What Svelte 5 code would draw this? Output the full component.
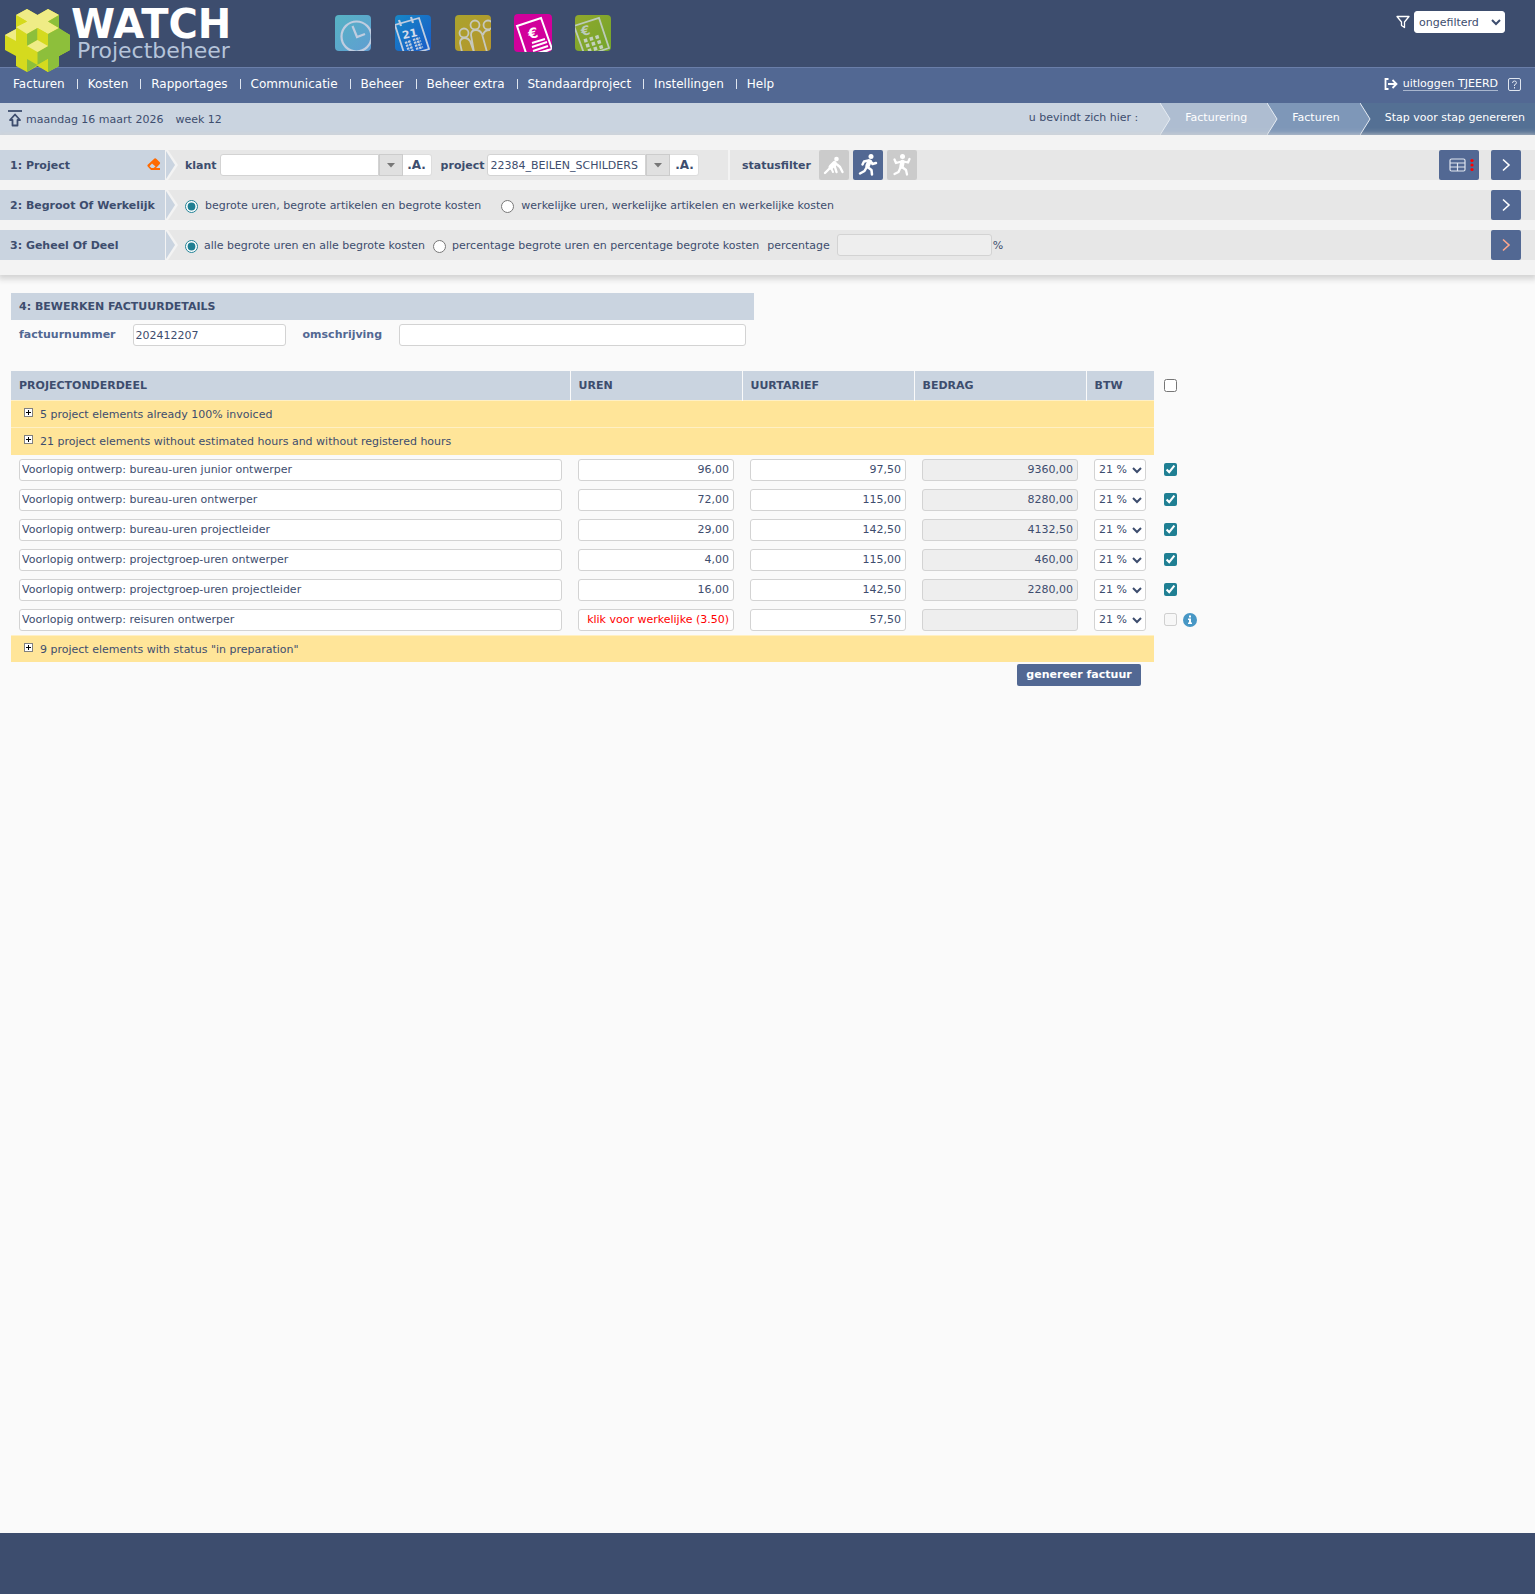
<script>
  const menu = [
    'Facturen',
    'Kosten',
    'Rapportages',
    'Communicatie',
    'Beheer',
    'Beheer extra',
    'Standaardproject',
    'Instellingen',
    'Help'
  ];

  let basis = $state('begroot');
  let deel = $state('alles');
  let status = $state('actief');

  let rows = $state([
    { naam: 'Voorlopig ontwerp: bureau-uren junior ontwerper', uren: '96,00', tarief: '97,50', bedrag: '9360,00', aan: true },
    { naam: 'Voorlopig ontwerp: bureau-uren ontwerper', uren: '72,00', tarief: '115,00', bedrag: '8280,00', aan: true },
    { naam: 'Voorlopig ontwerp: bureau-uren projectleider', uren: '29,00', tarief: '142,50', bedrag: '4132,50', aan: true },
    { naam: 'Voorlopig ontwerp: projectgroep-uren ontwerper', uren: '4,00', tarief: '115,00', bedrag: '460,00', aan: true },
    { naam: 'Voorlopig ontwerp: projectgroep-uren projectleider', uren: '16,00', tarief: '142,50', bedrag: '2280,00', aan: true },
    { naam: 'Voorlopig ontwerp: reisuren ontwerper', uren: 'klik voor werkelijke (3.50)', tarief: '57,50', bedrag: '', aan: false, werkelijk: true }
  ]);
</script>

{#snippet stepArrow()}
  <svg class="step-arrow" width="13" height="30" viewBox="0 0 13 30" aria-hidden="true">
    <path d="M0 0H3L13 15L3 30H0Z" fill="#f3f3f3" />
    <path d="M1 1L10 15L1 29Z" fill="#cad4e0" />
  </svg>
{/snippet}

{#snippet crumbArrow(color)}
  <svg width="11" height="32" viewBox="0 0 11 32" aria-hidden="true">
    <path d="M0 0L10 16L0 32Z" fill={color} />
    <path d="M0 0L10 16L0 32" fill="none" stroke="#e6ecf3" />
  </svg>
{/snippet}

{#snippet nextButton(color)}
  <button class="next" aria-label="volgende stap">
    <svg width="30" height="30" viewBox="0 0 30 30" fill="none" stroke={color} stroke-width="1.6">
      <path d="M12 9.500L18 15L12 20.500" />
    </svg>
  </button>
{/snippet}

{#snippet groupRow(text)}
  <tr class="group">
    <td colspan="5">
      <button class="expand">
        <svg width="9" height="9" viewBox="0 0 9 9" shape-rendering="crispEdges" aria-hidden="true">
          <rect x="0.500" y="0.500" width="8" height="8" fill="#fff" stroke="#808080" />
          <path d="M2 4.500H7M4.500 2V7" stroke="#000" />
        </svg>
        <span>{text}</span>
      </button>
    </td>
  </tr>
{/snippet}

<div class="page">
  <header>
    <a class="logo" href="/" aria-label="WATCH Projectbeheer">
      <svg width="65" height="63" viewBox="0 0 65 63" aria-hidden="true">
        <path d="M11 6L22 0L32.500 6L43 0L54 6V20L65 26V41L54 47V57L43 63L32.500 57L22 63L11 57V47L0 41V26L11 20Z" fill="#d5da1e" />
        <path d="M11 6L22 0L32.500 6L43 0L54 6L43 12.500L54 19L43 25L32.500 19L22 25L11 18L22 12.500Z" fill="#efec86" />
        <path d="M11 20L0 26L11 32Z" fill="#efec86" />
        <path d="M43 25L54 19L65 26V41L54 47V57L43 63V50L32.500 56V43L43 37Z" fill="#8dbf3b" />
        <path d="M22 25L32.500 19V31L22 37Z" fill="#8dbf3b" />
        <path d="M32.500 19L43 25V37L32.500 31Z" fill="#d5da1e" />
        <path d="M22 37L32.500 31L43 37L32.500 43Z" fill="#efec86" />
        <path d="M22 50L32.500 56L22 63Z" fill="#8dbf3b" />
        <path d="M43 50L32.500 56L43 63Z" fill="#d5da1e" />
        <path d="M43 12.500L54 6V19Z" fill="#8dbf3b" />
        <path d="M22 12.500L11 6V18Z" fill="#d5da1e" />
      </svg>
      <span class="brand">
        <span class="brand-name">WATCH</span>
        <span class="brand-sub">Projectbeheer</span>
      </span>
    </a>

    <div class="modules">
      <button aria-label="uren">
        <svg width="38" height="38" viewBox="0 0 38 38">
          <defs>
            <linearGradient id="g1" x1="0" y1="0" x2="1" y2="1"><stop offset="0" stop-color="#57b3c4" /><stop offset="1" stop-color="#5f9dd2" /></linearGradient>
            <clipPath id="c1"><rect x="1" y="1" width="36" height="36" rx="4" /></clipPath>
          </defs>
          <g clip-path="url(#c1)">
            <rect x="1" y="1" width="36" height="36" fill="url(#g1)" />
            <g fill="none" stroke="#c0cde0" stroke-width="2.200">
              <circle cx="22.500" cy="22.500" r="15" />
              <path d="M18.500 12L23 23L31 20" />
            </g>
          </g>
        </svg>
      </button>
      <button aria-label="planning">
        <svg width="38" height="38" viewBox="0 0 38 38">
          <defs>
            <linearGradient id="g2" x1="0" y1="0" x2="1" y2="1"><stop offset="0" stop-color="#1787c6" /><stop offset="1" stop-color="#185ac8" /></linearGradient>
            <clipPath id="c2"><rect x="1" y="1" width="36" height="36" rx="4" /></clipPath>
          </defs>
          <g clip-path="url(#c2)">
            <rect x="1" y="1" width="36" height="36" fill="url(#g2)" />
            <g fill="none" stroke="#c0cde0" stroke-width="1.800">
              <path d="M1 11L25 4L35 35L11 42Z" />
              <path d="M5 6L7 12M17 3L19 9" stroke-width="2.200" />
              <path d="M11 29L17 27M19 26L26 24M12 32L18 30M20 29L27 27M13 35L19 33M21 32L28 30M14 38L20 36M22 35L29 33" stroke-width="2.200" stroke-dasharray="2.500 0.800" />
            </g>
            <text x="8" y="24" transform="rotate(-12 14 20)" font-family="DejaVu Sans" font-size="11" font-weight="bold" fill="#d4dcea">21</text>
          </g>
        </svg>
      </button>
      <button aria-label="relaties">
        <svg width="38" height="38" viewBox="0 0 38 38">
          <defs>
            <linearGradient id="g3" x1="0" y1="0" x2="1" y2="1"><stop offset="0" stop-color="#aaa32d" /><stop offset="1" stop-color="#b5952d" /></linearGradient>
            <clipPath id="c3"><rect x="1" y="1" width="36" height="36" rx="4" /></clipPath>
          </defs>
          <g clip-path="url(#c3)">
            <rect x="1" y="1" width="36" height="36" fill="url(#g3)" />
            <g fill="none" stroke="#c6c8bd" stroke-width="1.800">
              <circle cx="10" cy="19" r="4.500" />
              <circle cx="21" cy="11" r="4.500" />
              <circle cx="34" cy="11" r="4.500" />
              <path d="M8 38L6 29Q6 24 11 24Q14 24 16 27L20 38M20 38L17 21Q17 16 22 16Q26 16 28 20L33 38M29 21Q30 16 36 16" />
            </g>
          </g>
        </svg>
      </button>
      <button class="current" aria-label="facturering">
        <svg width="38" height="38" viewBox="0 0 38 38">
          <defs><clipPath id="c4"><rect width="38" height="38" rx="4" /></clipPath></defs>
          <g clip-path="url(#c4)">
            <rect width="38" height="38" fill="#d1009b" />
            <g fill="none" stroke="#fff" stroke-width="2">
              <path d="M3 12L27 4L38 35L13 42Z" />
              <path d="M18 29L31 25M18 33L33 28M19 37L34 32M20 41L35 36" />
            </g>
            <text x="14" y="24" transform="rotate(-12 19 19)" font-family="DejaVu Sans" font-size="14" font-weight="bold" fill="#fff">€</text>
          </g>
        </svg>
      </button>
      <button aria-label="budget">
        <svg width="38" height="38" viewBox="0 0 38 38">
          <defs>
            <linearGradient id="g5" x1="0" y1="0" x2="1" y2="1"><stop offset="0" stop-color="#90a82c" /><stop offset="1" stop-color="#74a52c" /></linearGradient>
            <clipPath id="c5"><rect x="1" y="1" width="36" height="36" rx="4" /></clipPath>
          </defs>
          <g clip-path="url(#c5)">
            <rect x="1" y="1" width="36" height="36" fill="url(#g5)" />
            <path d="M0 12L25 4L35 34L11 42Z" fill="none" stroke="#bccbb9" stroke-width="1.800" />
            <g stroke="#c4d1bd" stroke-width="3.500" stroke-dasharray="3.500 2.500">
              <path d="M10 27L25 22.500M12 32L27 27.500M14 37L29 32.500" />
            </g>
            <text x="7" y="21" transform="rotate(-12 12 17)" font-family="DejaVu Sans" font-size="13" font-weight="bold" fill="#bccbb9">€</text>
          </g>
        </svg>
      </button>
    </div>

    <div class="filter">
      <svg width="14" height="14" viewBox="0 0 14 14" fill="none" stroke="#fff" stroke-width="1.300" stroke-linejoin="round" aria-hidden="true">
        <path d="M1 1.500H13L8.500 7V12.500L5.500 10.500V7Z" />
      </svg>
      <select aria-label="filter"><option>ongefilterd</option></select>
    </div>
  </header>

  <nav>
    <ul>
      {#each menu as item}
        <li><a href="#{item}">{item}</a></li>
      {/each}
    </ul>
    <div class="session">
      <a class="logout" href="#uitloggen">
        <svg width="14" height="12" viewBox="0 0 14 12" fill="none" stroke="#fff" stroke-width="1.800" aria-hidden="true">
          <path d="M4.500 1H1.500V11H4.500M4 6H12.500M8.500 2L12.500 6L8.500 10" />
        </svg>
        <span>uitloggen TJEERD</span>
      </a>
      <a class="help" href="#help" aria-label="help">
        <svg width="13" height="13" viewBox="0 0 13 13" fill="none" stroke="#dfe5ef" aria-hidden="true">
          <rect x="0.500" y="0.500" width="12" height="12" rx="1.500" />
          <path d="M4.500 5Q4.500 3 6.500 3Q8.500 3 8.500 4.800Q8.500 6 6.500 6.800V8M6.500 9V10.500" />
        </svg>
      </a>
    </div>
  </nav>

  <div class="bar">
    <div class="date">
      <svg width="14" height="18" viewBox="0 0 14 18" fill="none" stroke="#3d4d6e" stroke-width="1.800" aria-hidden="true">
        <path d="M0 1H14" />
        <path d="M7 4.500L12 10H9.500V15.500H4.500V10H2Z" stroke-linejoin="round" />
      </svg>
      <span>maandag 16 maart 2026</span>
      <span class="week">week 12</span>
    </div>
    <div class="crumbs">
      <span class="here">u bevindt zich hier :</span>
      <a class="crumb c1" href="#facturering">{@render crumbArrow('#cad4e0')}<span>Facturering</span></a>
      <a class="crumb c2" href="#facturen">{@render crumbArrow('#aebdd1')}<span>Facturen</span></a>
      <a class="crumb c3" href="#genereren">{@render crumbArrow('#7e97b8')}<span>Stap voor stap genereren</span></a>
    </div>
  </div>

  <section class="steps">
    <div class="step">
      <div class="step-name">
        <span>1: Project</span>
        <button class="erase" aria-label="wissen">
          <svg width="14" height="13" viewBox="0 0 14 13" fill="#ff6a00">
            <path fill-rule="evenodd" d="M7.500 0.500Q8.500 0 9.500 1L12.800 4.300Q13.500 5 12.800 6L9 10H13V12H4L0.700 8.500Q0 7.500 0.700 6.700ZM5 5.500L2.500 8.300L4.500 10H6.500L8.500 8.500Z" />
          </svg>
        </button>
      </div>
      {@render stepArrow()}
      <div class="pickers">
        <label for="klant">klant</label>
        <div class="combo">
          <input id="klant" class="klant" type="text" value="" />
          <button class="drop" aria-label="klanten tonen"><svg width="8" height="5" viewBox="0 0 8 5"><path d="M0 0H8L4 4.500Z" fill="#777" /></svg></button>
          <button class="all">.A.</button>
        </div>
        <label for="project">project</label>
        <div class="combo">
          <input id="project" class="project" type="text" value="22384_BEILEN_SCHILDERS" />
          <button class="drop" aria-label="projecten tonen"><svg width="8" height="5" viewBox="0 0 8 5"><path d="M0 0H8L4 4.500Z" fill="#777" /></svg></button>
          <button class="all">.A.</button>
        </div>
      </div>
      <div class="status">
        <span>statusfilter</span>
        <button class:on={status === 'voorbereiding'} onclick={() => (status = 'voorbereiding')} aria-label="in voorbereiding">
          <svg width="22" height="22" viewBox="0 0 22 22" fill="none" stroke="#fff" stroke-linecap="round" stroke-linejoin="round">
            <circle cx="13.500" cy="5" r="2.300" fill="#fff" stroke="none" />
            <path d="M11.500 9.500L8 13" stroke-width="5" />
            <path d="M11 10L13.500 18M7 14L2 19M14 10.500L17 13L19.500 18" stroke-width="2.400" />
            <path d="M8 14L10 18" stroke-width="2" />
          </svg>
        </button>
        <button class:on={status === 'actief'} onclick={() => (status = 'actief')} aria-label="actief">
          <svg width="22" height="22" viewBox="0 0 22 22" fill="none" stroke="#fff" stroke-linecap="round" stroke-linejoin="round">
            <circle cx="14" cy="2.500" r="2.500" fill="#fff" stroke="none" />
            <path d="M12.500 7.500L10.500 12" stroke-width="4.500" />
            <path d="M11.500 6.500L7 7.500L5.500 10.500M13.500 7L15.500 10L19 9M10.500 13L14.500 16L15 20.500M9.500 13.500L7.500 17L3 19.500" stroke-width="2.500" />
          </svg>
        </button>
        <button class:on={status === 'afgerond'} onclick={() => (status = 'afgerond')} aria-label="afgerond">
          <svg width="22" height="22" viewBox="0 0 22 22" fill="none" stroke="#fff" stroke-linecap="round" stroke-linejoin="round">
            <circle cx="11.500" cy="2.500" r="2.500" fill="#fff" stroke="none" />
            <path d="M11.500 8L10.500 12.500" stroke-width="4.500" />
            <path d="M10.500 7.500L5 9L3.500 5.500M12.500 7.500L17 8.500L18.500 5M11 13L15 16L16 20.500M9.500 13.500L7.500 18L3.500 20" stroke-width="2.300" />
          </svg>
        </button>
      </div>
      <div class="actions">
        <button class="layout" aria-label="kolommen">
          <svg width="26" height="14" viewBox="0 0 26 14" fill="none" stroke="#dfe5ef" stroke-width="1.200">
            <rect x="1" y="1" width="15" height="12" rx="1.500" />
            <path d="M1 5H16M1 9H16M8.500 5V13" />
            <g fill="#f00" stroke="none"><circle cx="23" cy="2.500" r="1.600" /><circle cx="23" cy="7" r="1.600" /><circle cx="23" cy="11.500" r="1.600" /></g>
          </svg>
        </button>
        {@render nextButton('#fff')}
      </div>
    </div>

    <div class="step">
      <div class="step-name">2: Begroot Of Werkelijk</div>
      {@render stepArrow()}
      <div class="choices wide">
        <label><input type="radio" name="basis" value="begroot" bind:group={basis} />begrote uren, begrote artikelen en begrote kosten</label>
        <label><input type="radio" name="basis" value="werkelijk" bind:group={basis} />werkelijke uren, werkelijke artikelen en werkelijke kosten</label>
      </div>
      <div class="actions">{@render nextButton('#fff')}</div>
    </div>

    <div class="step">
      <div class="step-name">3: Geheel Of Deel</div>
      {@render stepArrow()}
      <div class="choices">
        <label><input type="radio" name="deel" value="alles" bind:group={deel} />alle begrote uren en alle begrote kosten</label>
        <label><input type="radio" name="deel" value="percentage" bind:group={deel} />percentage begrote uren en percentage begrote kosten</label>
        <span class="percent">
          <label for="percentage">percentage</label>
          <input id="percentage" type="text" disabled={deel === 'alles'} />
          <span>%</span>
        </span>
      </div>
      <div class="actions">{@render nextButton('#ffa78c')}</div>
    </div>
  </section>

  <main>
    <section class="details">
      <h2>4: BEWERKEN FACTUURDETAILS</h2>
      <div class="fields">
        <label for="nummer">factuurnummer</label>
        <input id="nummer" type="text" value="202412207" />
        <label for="omschrijving">omschrijving</label>
        <input id="omschrijving" type="text" />
      </div>
    </section>

    <table>
      <colgroup>
        <col class="col-name" />
        <col class="col-num" />
        <col class="col-num" />
        <col class="col-num" />
        <col class="col-vat" />
        <col class="col-check" />
      </colgroup>
      <thead>
        <tr>
          <th>PROJECTONDERDEEL</th>
          <th>UREN</th>
          <th>UURTARIEF</th>
          <th>BEDRAG</th>
          <th>BTW</th>
          <td class="check"><div><input type="checkbox" aria-label="alles selecteren" /></div></td>
        </tr>
      </thead>
      <tbody>
        {@render groupRow('5 project elements already 100% invoiced')}
        {@render groupRow('21 project elements without estimated hours and without registered hours')}
        {#each rows as row}
          <tr class="line">
            <td><input type="text" aria-label="projectonderdeel" bind:value={row.naam} /></td>
            <td><input class="num" class:actual={row.werkelijk} type="text" aria-label="uren" bind:value={row.uren} /></td>
            <td><input class="num" type="text" aria-label="uurtarief" bind:value={row.tarief} /></td>
            <td><input class="num" type="text" aria-label="bedrag" value={row.bedrag} disabled /></td>
            <td><select aria-label="btw"><option>21 %</option></select></td>
            <td class="check">
              <div>
                <input type="checkbox" aria-label="selecteren" bind:checked={row.aan} disabled={row.werkelijk} />
                {#if row.werkelijk}
                  <svg width="14" height="14" viewBox="0 0 14 14" aria-hidden="true">
                    <circle cx="7" cy="7" r="7" fill="#4797c5" />
                    <path d="M6 2.500H8V4.500H6ZM5 5.500H8V9.500H9V11H5V9.500H6V7H5Z" fill="#fff" />
                  </svg>
                {/if}
              </div>
            </td>
          </tr>
        {/each}
        {@render groupRow('9 project elements with status "in preparation"')}
      </tbody>
    </table>
    <div class="submit"><button>genereer factuur</button></div>
  </main>

  <footer></footer>
</div>

<style>
  :global(body) {
    background: #fafafa;
  }

  .page {
    display: flex;
    flex-direction: column;
    min-height: 100vh;
    font: 11px/16px Verdana, 'DejaVu Sans', sans-serif;
    color: #3d4d6e;
  }

  button,
  input,
  select {
    font: inherit;
    color: inherit;
    margin: 0;
    box-sizing: border-box;
  }

  button {
    border: 0;
    padding: 0;
    background: none;
    cursor: pointer;
  }

  a {
    color: inherit;
    text-decoration: none;
  }

  svg {
    display: block;
    flex: none;
  }

  input[type='text'],
  select {
    height: 22px;
    padding: 0 2px;
    border: 1px solid #d3d3d3;
    border-radius: 3px;
    background: #fff;
  }

  input[type='text']:disabled {
    background: #eee;
  }

  input[type='radio'],
  input[type='checkbox'] {
    width: 13px;
    height: 13px;
    accent-color: #1f7f93;
  }

  /* Header */
  header {
    display: flex;
    align-items: flex-start;
    height: 67px;
    background: #3d4d6e;
  }

  .logo {
    display: flex;
    width: 330px;
    padding: 9px 0 0 5px;
    box-sizing: border-box;
    /* the cube hangs over the menu bar */
    position: relative;
    z-index: 1;
  }

  .brand {
    display: flex;
    flex-direction: column;
    padding-left: 1px;
  }

  .brand-name {
    color: #fff;
    font-size: 40px;
    font-weight: bold;
    line-height: 30px;
  }

  .brand-sub {
    padding-left: 6px;
    color: #b5c4da;
    font-size: 22px;
    line-height: 24px;
  }

  .modules {
    display: flex;
    gap: 22px;
    padding: 14px 0 0 4px;
  }

  .filter {
    display: flex;
    align-items: center;
    gap: 4px;
    margin-left: auto;
    padding: 11px 30px 0 0;
  }

  .filter select {
    width: 91px;
    padding: 0;
    border-color: #fff;
  }

  /* Menu */
  nav {
    display: flex;
    justify-content: space-between;
    align-items: center;
    height: 36px;
    padding: 0 14px 3px 13px;
    border-top: 1px solid #6a7ea9;
    background: #526893;
    color: #fff;
    font-size: 12px;
    box-sizing: border-box;
  }

  nav ul {
    display: flex;
    margin: 0;
    padding: 0;
    list-style: none;
  }

  nav li {
    display: flex;
    align-items: center;
  }

  nav li + li::before {
    content: '';
    width: 1px;
    height: 10px;
    margin: 0 10px 0 12px;
    background: #dfe5ef;
  }

  .session {
    display: flex;
    align-items: center;
    gap: 10px;
    font-size: 11px;
  }

  .logout {
    display: flex;
    align-items: center;
    gap: 5px;
  }

  .logout span {
    line-height: 13px;
    border-bottom: 1px solid #a9b6ce;
  }

  /* Date and breadcrumbs */
  .bar {
    display: flex;
    justify-content: space-between;
    height: 32px;
    background: #cad4e0;
  }

  .date {
    display: flex;
    align-items: center;
    gap: 4px;
    padding-left: 8px;
  }

  .date span {
    padding-top: 2px;
  }

  .date .week {
    padding-left: 8px;
  }

  .crumbs {
    display: flex;
    line-height: 30px;
  }

  .here {
    padding-right: 22px;
  }

  .crumb {
    display: flex;
    gap: 14px;
    padding-right: 20px;
    color: #fff;
  }

  .c1 {
    background: #aebdd1;
  }

  .c2 {
    background: #7e97b8;
  }

  .c3 {
    padding-right: 10px;
    background: #547094;
  }

  /* Steps */
  .steps {
    display: flex;
    flex-direction: column;
    gap: 10px;
    padding: 15px 0;
    background: #f3f3f3;
    box-shadow: 0 2px 6px 2px #d2d2d2;
  }

  .step {
    display: flex;
    height: 30px;
    background: #e7e7e7;
  }

  .step-name {
    display: flex;
    justify-content: space-between;
    align-items: center;
    width: 165px;
    padding: 2px 4px 0 10px;
    box-sizing: border-box;
    background: #cad4e0;
    font-weight: bold;
    white-space: nowrap;
  }

  .erase {
    padding-bottom: 3px;
  }

  .pickers,
  .status,
  .choices {
    display: flex;
    align-items: center;
  }

  .pickers {
    gap: 3px;
    width: 552px;
    padding-left: 7px;
    box-sizing: border-box;
    border-right: 2px solid #f3f3f3;
  }

  .pickers label,
  .status span {
    padding-top: 2px;
    font-weight: bold;
  }

  .combo {
    display: flex;
    margin-right: 6px;
  }

  .combo input {
    border-radius: 3px 0 0 3px;
  }

  .klant,
  .project {
    width: 159px;
  }

  .drop {
    display: flex;
    align-items: center;
    justify-content: center;
    width: 24px;
    height: 22px;
    border: 1px solid #ccc;
    background: #e0e0e0;
  }

  .all {
    width: 29px;
    height: 22px;
    border: 1px solid #ddd;
    border-left: 0;
    border-radius: 0 3px 3px 0;
    background: #fff;
    font-size: 12px;
    font-weight: bold;
  }

  .status {
    gap: 4px;
    padding-left: 12px;
  }

  .status span {
    padding-right: 4px;
  }

  .status button {
    display: flex;
    align-items: center;
    justify-content: center;
    width: 30px;
    height: 30px;
    border-radius: 2px;
    background: #cbcbcb;
  }

  .status button.on {
    background: #526893;
  }

  .choices {
    gap: 8px;
    padding: 2px 0 0 7px;
  }

  .choices.wide {
    gap: 20px;
  }

  .choices label {
    display: flex;
    align-items: center;
    gap: 6px;
  }

  .choices.wide label {
    gap: 7px;
  }

  .percent {
    display: flex;
    align-items: center;
  }

  .percent input {
    width: 155px;
    margin: 0 1px 2px 7px;
  }

  .actions {
    display: flex;
    gap: 12px;
    margin-left: auto;
    padding-right: 14px;
  }

  .layout,
  .next {
    display: flex;
    align-items: center;
    justify-content: center;
    width: 30px;
    height: 30px;
    border-radius: 2px;
    background: #526893;
  }

  .layout {
    width: 40px;
    padding-left: 6px;
  }

  /* Invoice */
  main {
    flex: 1;
    padding: 18px 11px;
  }

  .details {
    width: 743px;
  }

  h2 {
    margin: 0;
    padding: 6px 8px 5px;
    background: #cad4e0;
    font-size: 11px;
    line-height: 16px;
  }

  .fields {
    display: flex;
    align-items: center;
    gap: 17px;
    padding: 4px 8px 25px;
  }

  .fields label {
    color: #526893;
    font-weight: bold;
  }

  #nummer {
    width: 153px;
  }

  #omschrijving {
    flex: 1;
  }

  table {
    width: 1190px;
    table-layout: fixed;
    border-collapse: collapse;
  }

  .col-name {
    width: 559px;
  }

  .col-num {
    width: 172px;
  }

  .col-vat {
    width: 68px;
  }

  .col-check {
    width: 47px;
  }

  th {
    height: 28px;
    padding: 1px 8px 0;
    background: #cad4e0;
    text-align: left;
  }

  th + th {
    border-left: 1px solid #fafafa;
  }

  td {
    padding: 0 8px;
  }

  .group td {
    height: 27px;
    padding: 0 13px;
    border-top: 1px solid #fff0c4;
    background: #ffe599;
    box-sizing: border-box;
  }

  .expand {
    display: flex;
    gap: 7px;
  }

  .expand span {
    padding-top: 2px;
  }

  .expand svg {
    margin-top: 3px;
  }

  .line td {
    height: 30px;
  }

  .line input[type='text'],
  .line select {
    display: block;
    width: 100%;
  }

  .line select {
    padding: 0;
  }

  .line .num {
    padding-right: 4px;
    text-align: right;
  }

  .line .actual {
    color: #f00;
  }

  tr .check {
    padding: 0 0 0 10px;
  }

  .check div {
    display: flex;
    align-items: center;
    gap: 6px;
  }

  .submit {
    display: flex;
    justify-content: flex-end;
    width: 1130px;
    padding-top: 2px;
  }

  .submit button {
    width: 124px;
    height: 22px;
    border-radius: 2px;
    background: #526893;
    color: #fff;
    font-weight: bold;
    white-space: nowrap;
  }

  footer {
    height: 61px;
    background: #3d4d6e;
  }
</style>
